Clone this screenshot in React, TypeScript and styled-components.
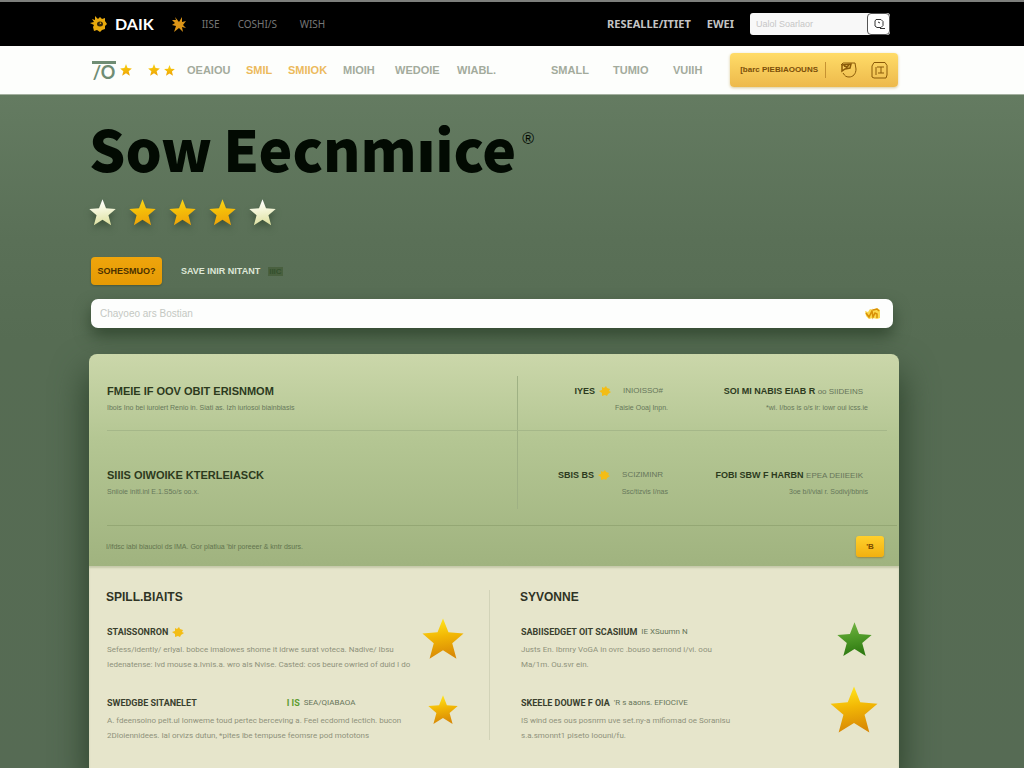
import React, { useId } from "react";
import styled, { createGlobalStyle } from "styled-components";

const GlobalStyle = createGlobalStyle`
  * { box-sizing: border-box; }
  html, body, #root { min-height: 100%; }
  body {
    margin: 0;
    background: #576d54;
    font-family: "Liberation Sans", Arial, sans-serif;
    color: #2b3522;
  }
  h1, h2, h3, p { margin: 0; }
  a { color: inherit; text-decoration: none; }
  button, input { font: inherit; }
  button { cursor: pointer; border: 0; padding: 0; }
  svg { display: block; flex: none; }
`;

const Page = styled.div`
  min-height: 100vh;
  display: flex;
  flex-direction: column;
  background: linear-gradient(#647b61 95px, #5a7057 240px, #566c53 340px, #566b54);
`;

const TopBar = styled.header`
  display: flex;
  align-items: center;
  height: 46px;
  padding: 0 134px 0 90px;
  background: #000;
  border-top: 2px solid #7d7f7c;
`;

const Brand = styled.a`
  display: flex;
  align-items: center;
  gap: 7px;
  color: #fff;
  font: bold 16px/20px Lato, sans-serif;
`;

const TopLinks = styled.nav`
  display: grid;
  grid-template-columns: 30px 36px 62px 30px;
  align-items: center;
  margin-left: 18px;
`;

const TopLink = styled.a<{ $bright?: boolean }>`
  color: ${(p) => (p.$bright ? "#c4c4c4" : "#777")};
  font: ${(p) => (p.$bright ? "bold 11px" : "normal 10px")}/14px "Noto Sans", sans-serif;
  white-space: nowrap;
`;

const TopRight = styled.div`
  display: flex;
  align-items: center;
  margin-left: auto;
  gap: 16px;
`;

const TopSearch = styled.form`
  display: flex;
  width: 140px;
  height: 22px;
  background: #f8f8f8;
  border-radius: 3px;
`;

const TopInput = styled.input`
  flex: 1;
  min-width: 0;
  padding: 0 6px;
  border: 0;
  background: none;
  font-size: 9px;
  &::placeholder { color: #c6c6c6; opacity: 1; }
`;

const TopSearchButton = styled.button`
  display: grid;
  place-items: center;
  width: 23px;
  background: #fff;
  border: 1px solid #555;
  border-radius: 4px;
`;

const NavBar = styled.div`
  display: flex;
  align-items: center;
  height: 49px;
  padding: 0 126px 0 92px;
  background: #fdfefc;
  border-bottom: 1px solid #a4b1a0;
`;

const Logo = styled.a`
  width: 24px;
  border-top: 3px solid #6f8d74;
  color: #6f8d74;
  font: bold 18px/16px Lato, sans-serif;
  text-align: center;
`;

const NavStars = styled.div`
  display: flex;
  align-items: center;
  width: 67px;
  padding-left: 4px;
  gap: 4px;
  & > :first-child { margin-right: 12px; }
`;

const MainLinks = styled.nav`
  display: grid;
  grid-template-columns: 59px 42px 55px 52px 62px 94px 62px 60px 40px;
  align-items: center;
  margin-left: 4px;
`;

const MainLink = styled.a<{ $warm?: boolean }>`
  color: ${(p) => (p.$warm ? "#ecba5c" : "#a3ab9c")};
  font: bold 11px/14px "Liberation Sans", sans-serif;
`;

const Actions = styled.div`
  display: flex;
  align-items: center;
  gap: 14px;
  height: 34px;
  margin-left: auto;
  padding: 0 10px;
  color: #8a5a08;
  background: linear-gradient(#ffdc68, #edb94b);
  border-radius: 4px;
  box-shadow: 0 1px 3px #d8c99a;
`;

const ActionText = styled.button`
  padding-right: 7px;
  color: #7a4e08;
  background: none;
  border-right: 1px solid #c69232;
  font-size: 8px;
  font-weight: bold;
  line-height: 16px;
  white-space: nowrap;
`;

const IconButton = styled.button`
  color: inherit;
  background: none;
`;

const Content = styled.main`
  flex: 1;
  display: flex;
  flex-direction: column;
  padding: 22px 125px 0 89px;
`;

const Title = styled.h1`
  color: #020a02;
  font: 900 57px/60px "Noto Sans CJK SC", "Noto Sans", sans-serif;
  white-space: nowrap;
`;

const TitleRow = styled.div`
  display: flex;
  align-items: flex-start;
  gap: 6px;
`;

const Words = styled.span`
  display: flex;
  gap: 11px;
`;

const Mark = styled.span`
  margin-top: 14px;
  color: #020a02;
  font: normal 16px/16px "Liberation Sans", sans-serif;
`;

const Rating = styled.div`
  display: flex;
  gap: 13px;
  height: 28px;
  margin-top: 22px;
  filter: drop-shadow(0 4px 3px #3f553c);
`;

const Cta = styled.div`
  display: flex;
  align-items: center;
  gap: 19px;
  margin: 30px 0 14px 2px;
`;

const CtaButton = styled.button`
  width: 71px;
  height: 28px;
  color: #4a3000;
  background: linear-gradient(#efa50c, #e59a04);
  border-radius: 4px;
  box-shadow: 0 1px 2px #45583d;
  font-size: 9px;
  font-weight: bold;
`;

const CtaLink = styled.a`
  color: #dfe8d8;
  font-size: 9px;
  font-weight: bold;
`;

const CtaTag = styled.span`
  margin-left: 8px;
  padding: 0 1px;
  color: #34502e;
  background: #49603f;
  font-size: 8px;
`;

const SearchBox = styled.form`
  display: flex;
  align-items: center;
  height: 29px;
  margin: 0 6px 26px 2px;
  padding: 0 12px 0 9px;
  background: #fdfefd;
  border-radius: 7px;
  box-shadow: 0 8px 16px #344a32;
`;

const SearchInput = styled.input`
  flex: 1;
  min-width: 0;
  padding: 0;
  border: 0;
  background: none;
  font-size: 10px;
  &::placeholder { color: #c4c8c2; opacity: 1; }
`;

const Card = styled.div`
  flex: 1;
  display: flex;
  flex-direction: column;
  border-radius: 8px 8px 0 0;
  box-shadow: 0 20px 34px 2px #2c422b;
`;

const Panel = styled.section`
  padding-top: 22px;
  background: linear-gradient(#cbd7aa, #b4c693 40%, #a0b37f);
  border-radius: 8px 8px 0 0;
`;

const PanelRow = styled.div<{ $last?: boolean }>`
  display: grid;
  grid-template-columns: minmax(0, 410px) minmax(150px, 1fr) 200px;
  height: ${(p) => (p.$last ? 95 : 55)}px;
  margin: 0 ${(p) => (p.$last ? 2 : 12)}px 0 18px;
  padding: 0 ${(p) => (p.$last ? 29 : 19)}px ${(p) => (p.$last ? 16 : 0)}px 0;
  border-bottom: 1px solid ${(p) => (p.$last ? "#94a774" : "#a5b789")};
`;

const Cell = styled.div<{ $end?: boolean; $low?: boolean; $rule?: boolean }>`
  padding-top: ${(p) => (p.$low ? 37 : 8)}px;
  text-align: ${(p) => (p.$end ? "right" : "left")};
  border-left: ${(p) => (p.$rule ? "1px solid #9fb184" : "0")};
  white-space: nowrap;
`;

const RowTitle = styled.h2`
  font: bold 11px/14px "Liberation Sans", sans-serif;
  color: #2c3a1d;
`;

const RowNote = styled.p`
  margin-top: 3px;
  color: #66775a;
  font-size: 7px;
  line-height: 14px;
`;

const Metric = styled.h3`
  display: flex;
  justify-content: flex-end;
  align-items: center;
  gap: 4px;
  height: 14px;
  padding-right: 5px;
  color: #2c3a1d;
  font-size: 9px;
  line-height: 14px;
`;

const Soft = styled.span<{ $inset?: boolean }>`
  margin-left: ${(p) => (p.$inset ? 8 : 0)}px;
  color: #66755a;
  font-size: 8px;
  font-weight: normal;
`;

const PanelFoot = styled.div`
  display: flex;
  align-items: center;
  justify-content: space-between;
  height: 40px;
  padding: 0 15px 0 17px;
  color: #62744e;
  font-size: 7px;
`;

const FootButton = styled.button`
  width: 28px;
  height: 21px;
  color: #7a4a00;
  background: linear-gradient(#ffd02c, #f2b010);
  border-radius: 3px;
  box-shadow: 0 1px 2px #94894a;
  font-size: 8px;
  font-weight: bold;
`;

const Lists = styled.section`
  flex: 1;
  display: grid;
  grid-template-columns: minmax(0, 384fr) minmax(0, 388fr);
  align-content: start;
  padding: 24px 21px 16px 17px;
  background: #e6e5cb;
  box-shadow: inset 0 2px 2px #c6c9aa;
`;

const Column = styled.div<{ $ruled?: boolean }>`
  height: 150px;
  padding: 0 ${(p) => (p.$ruled ? 22 : 0)}px 0 ${(p) => (p.$ruled ? 0 : 30)}px;
  border-right: ${(p) => (p.$ruled ? "1px solid #d2d3b8" : "0")};
`;

const ColumnTitle = styled.h2`
  color: #2f3325;
  font: bold 12px/14px "Liberation Sans", sans-serif;
`;

const Item = styled.article<{ $gap: number }>`
  display: flex;
  justify-content: space-between;
  align-items: flex-start;
  margin-top: ${(p) => p.$gap}px;
`;

const ItemBody = styled.div`
  min-width: 0;
  padding-left: 1px;
  font-family: Roboto, "Liberation Sans", sans-serif;
  white-space: nowrap;
`;

const ItemTitle = styled.h3`
  display: flex;
  align-items: center;
  gap: 4px;
  height: 14px;
  margin-bottom: 3px;
  color: #3a3f2e;
  font-size: 9px;
  line-height: 14px;
`;

const ItemText = styled.p`
  color: #8f927b;
  font-size: 8px;
  line-height: 15px;
`;

const Status = styled.span`
  display: flex;
  gap: 4px;
  margin-left: 86px;
  color: #5d9c30;
`;

const StarSlot = styled.div`
  display: grid;
  place-items: center;
  flex: none;
  width: 48px;
  height: 48px;
  margin-top: -10px;
`;

const tones = {
  gold: ["#ffe21c", "#f2b705", "#d98a06"],
  flat: ["#f8d41a", "#f5bd08", "#eda40a"],
  pale: ["#ffffff", "#f3f5d6", "#dfe2a4"],
  green: ["#6fb040", "#4f9a28", "#2f7a12"],
};

function Star({ size, tone = "flat" }: { size: number; tone?: keyof typeof tones }) {
  const id = useId();
  const [a, b, c] = tones[tone];
  return (
    <svg width={size} height={size} viewBox="0 0 100 100" aria-hidden="true">
      <linearGradient id={id} x1="0" y1="0" x2="0.15" y2="1">
        <stop offset="0.1" stopColor={a} />
        <stop offset="0.5" stopColor={b} />
        <stop offset="1" stopColor={c} />
      </linearGradient>
      <path
        d="M50 1 63 34 99 37 72 60 82 97 50 77 18 97 28 60 1 37 37 34Z"
        fill={`url(#${id})`}
      />
    </svg>
  );
}

function Blob() {
  return (
    <svg width="12" height="12" viewBox="0 0 12 12" aria-hidden="true">
      <path d="M3 2l2 1 2-2 1 2 3 1-1 2 2 1-3 2-1 2-2-1-3 1 0-3-3-2 3-1z" fill="#f3bd16" />
    </svg>
  );
}

function Gear() {
  return (
    <svg width="18" height="18" viewBox="0 0 18 18" aria-hidden="true">
      <path
        d="M5 1l3 3 2-2 2 2 3-1v3l2 3-2 2 0 3-3 1-2 2-3-2-3 1-1-4 1-2-4-2 4-1-2-3 3 1z"
        fill="#e8a90c"
      />
      <ellipse cx="10" cy="9" rx="3" ry="2.500" fill="#33260a" />
      <path d="M10 7l1.500 1.500-2 1z" fill="#e8a90c" />
    </svg>
  );
}

function Spark() {
  return (
    <svg width="14" height="17" viewBox="0 0 14 17" aria-hidden="true">
      <path
        d="M3 1l4 5 3-5v5l4-1-3 4 3 3-4-1 1 5-4-4-5 4 2-6-4-1 3-2-3-3h4z"
        fill="#dc9518"
      />
    </svg>
  );
}

function Lens() {
  return (
    <svg width="12" height="12" viewBox="0 0 12 12" fill="none" stroke="#333" aria-hidden="true">
      <path d="M3 1.500h5l2 2v4l-2 2H4L2 8V3zM7 10.500h5M5 4l2 1" />
    </svg>
  );
}

function Badge() {
  return (
    <svg width="17" height="18" viewBox="0 0 17 18" fill="none" stroke="currentColor" aria-hidden="true">
      <path d="M1 4l2-2h12l1 6c0 5-3 8-7 8-3 0-4-1-6-4" />
      <path d="M2 4v6l3-2 5-1 1-4zM4 5l3 1M9 4l-3 3" strokeWidth="1.500" />
    </svg>
  );
}

function Box() {
  return (
    <svg width="17" height="18" viewBox="0 0 17 18" fill="none" stroke="currentColor" aria-hidden="true">
      <path d="M1 5l2-3.500h11l2 3V14l-1 3H3L1 16zM5 6v8M6 6h7M10 6v6M7 12h6" />
    </svg>
  );
}

function Sprout() {
  return (
    <svg width="17" height="13" viewBox="0 0 17 13" aria-hidden="true">
      <path d="M1 4l3 1 2-3 3 1 4-2 3 2v8l-3 1-4-1-4 1-3-3z" fill="#fbd84c" />
      <path d="M2 6l3 4 3-6 1 6 2-4 2 1v4M9 3l4-1 2 2" fill="none" stroke="#d89008" strokeWidth="1.500" />
    </svg>
  );
}

const leftItems = [
  {
    title: "STAISSONRON",
    star: true,
    lines: [
      "Sefess/idently/ erlyal. bobce imalowes shome it idrwe surat voteca. Nadive/ Ibsu",
      "Iedenatense: Ivd mouse a.Ivnis.a. wro als Nvise. Casted: cos beure owried of duid I do",
    ],
    size: 42,
  },
  {
    title: "SWEDGBE SITANELET",
    status: true,
    lines: [
      "A. fdeensoino pelt.ul lonweme toud pertec berceving a. Feel ecdomd lectich. bucon",
      "2Dloiennidees. Ial orvizs dutun, *pites lbe tempuse feomsre pod mototons",
    ],
    size: 30,
  },
];

const rightItems = [
  {
    title: "SABIISEDGET OIT SCASIIUM",
    soft: "IE XSuumn N",
    lines: ["Justs En. Ibrnry VoGA in ovrc .bouso aernond i/vi. oou", "Ma/1m. Ou.svr ein."],
    size: 35,
    tone: "green" as const,
  },
  {
    title: "SKEELE DOUWE F OIA",
    soft: "'R s aaons. EFIOCIVE",
    lines: [
      "IS wind oes ous posnrm uve set.ny-a mifiomad oe Soranisu",
      "s.a.smonnt1 piseto Ioouni/fu.",
    ],
    size: 48,
    tone: "gold" as const,
  },
];

export default function App() {
  return (
    <Page>
      <GlobalStyle />
      <TopBar>
        <Brand href="#"><Gear />DAIK</Brand>
        <TopLinks>
          <Spark />
          <TopLink href="#">IISE</TopLink>
          <TopLink href="#">COSHI/S</TopLink>
          <TopLink href="#">WISH</TopLink>
        </TopLinks>
        <TopRight>
          <TopLink href="#" $bright>RESEALLE/ITIET</TopLink>
          <TopLink href="#" $bright>EWEI</TopLink>
          <TopSearch role="search">
            <TopInput aria-label="Search" placeholder="Ualol Soarlaor" />
            <TopSearchButton type="button" aria-label="Submit search"><Lens /></TopSearchButton>
          </TopSearch>
        </TopRight>
      </TopBar>
      <NavBar>
        <Logo href="#">/O</Logo>
        <NavStars><Star size={12} /><Star size={12} /><Star size={11} /></NavStars>
        <MainLinks>
          <MainLink href="#">OEAIOU</MainLink>
          <MainLink href="#" $warm>SMIL</MainLink>
          <MainLink href="#" $warm>SMIIOK</MainLink>
          <MainLink href="#">MIOIH</MainLink>
          <MainLink href="#">WEDOIE</MainLink>
          <MainLink href="#">WIABL.</MainLink>
          <MainLink href="#">SMALL</MainLink>
          <MainLink href="#">TUMIO</MainLink>
          <MainLink href="#">VUIIH</MainLink>
        </MainLinks>
        <Actions>
          <ActionText type="button">[barc PIEBIAOOUNS</ActionText>
          <IconButton type="button" aria-label="Saved"><Badge /></IconButton>
          <IconButton type="button" aria-label="Basket"><Box /></IconButton>
        </Actions>
      </NavBar>
      <Content>
        <TitleRow>
          <Title><Words><span>Sow</span> <span>Eecnmıice</span></Words></Title>
          <Mark>®</Mark>
        </TitleRow>
        <Rating role="img" aria-label="Rating">
          <Star size={27} tone="pale" />
          <Star size={27} />
          <Star size={27} />
          <Star size={27} />
          <Star size={27} tone="pale" />
        </Rating>
        <Cta>
          <CtaButton type="button">SOHESMUO?</CtaButton>
          <CtaLink href="#">SAVE INIR NITANT<CtaTag>IIIC</CtaTag></CtaLink>
        </Cta>
        <SearchBox>
          <SearchInput aria-label="Find" placeholder="Chayoeo ars Bostian" />
          <IconButton type="button" aria-label="Go"><Sprout /></IconButton>
        </SearchBox>
        <Card>
          <Panel>
            <PanelRow>
              <Cell>
                <RowTitle>FMEIE IF OOV OBIT ERISNMOM</RowTitle>
                <RowNote>Ibois Ino bei iuroiert Renio in. Siati as. Izh iuriosoi biainbiasis</RowNote>
              </Cell>
              <Cell $end $rule>
                <Metric>IYES <Blob /><Soft $inset>INIOISSO#</Soft></Metric>
                <RowNote>Faisie Ooaj Inpn.</RowNote>
              </Cell>
              <Cell $end>
                <Metric><span>SOI MI NABIS EIAB R <Soft>oo SIIDEINS</Soft></span></Metric>
                <RowNote>*wi. I/bos is o/s ir: iowr oui icss.ie</RowNote>
              </Cell>
            </PanelRow>
            <PanelRow $last>
              <Cell $low>
                <RowTitle>SIIIS OIWOIKE KTERLEIASCK</RowTitle>
                <RowNote>Sniioie initl.inl E.1.S5o/s oo.x.</RowNote>
              </Cell>
              <Cell $end $low $rule>
                <Metric>SBIS BS <Blob /><Soft $inset>SCIZIMINR</Soft></Metric>
                <RowNote>Ssc/tizvis I/nas</RowNote>
              </Cell>
              <Cell $end $low>
                <Metric><span>FOBI SBW F HARBN <Soft>EPEA DEIIEEIK</Soft></span></Metric>
                <RowNote>3oe b/i/viai r. Sodivj/bbnis</RowNote>
              </Cell>
            </PanelRow>
            <PanelFoot>
              <p>I/ifdsc iabi biaucioi ds IMA. Gor platlua 'bir poreeer &amp; kntr dsurs.</p>
              <FootButton type="button">'B</FootButton>
            </PanelFoot>
          </Panel>
          <Lists>
            <Column $ruled>
              <ColumnTitle>SPILL.BIAITS</ColumnTitle>
              {leftItems.map((item, i) => (
                <Item key={item.title} $gap={i ? 24 : 21}>
                  <ItemBody>
                    <ItemTitle>
                      {item.title}
                      {item.star && <Blob />}
                      {item.status && <Status>I IS <Soft>SEA/QIABAOA</Soft></Status>}
                    </ItemTitle>
                    {item.lines.map((line) => <ItemText key={line}>{line}</ItemText>)}
                  </ItemBody>
                  <StarSlot><Star size={item.size} tone="gold" /></StarSlot>
                </Item>
              ))}
            </Column>
            <Column>
              <ColumnTitle>SYVONNE</ColumnTitle>
              {rightItems.map((item, i) => (
                <Item key={item.title} $gap={i ? 24 : 21}>
                  <ItemBody>
                    <ItemTitle>{item.title} <Soft>{item.soft}</Soft></ItemTitle>
                    {item.lines.map((line) => <ItemText key={line}>{line}</ItemText>)}
                  </ItemBody>
                  <StarSlot><Star size={item.size} tone={item.tone} /></StarSlot>
                </Item>
              ))}
            </Column>
          </Lists>
        </Card>
      </Content>
    </Page>
  );
}
